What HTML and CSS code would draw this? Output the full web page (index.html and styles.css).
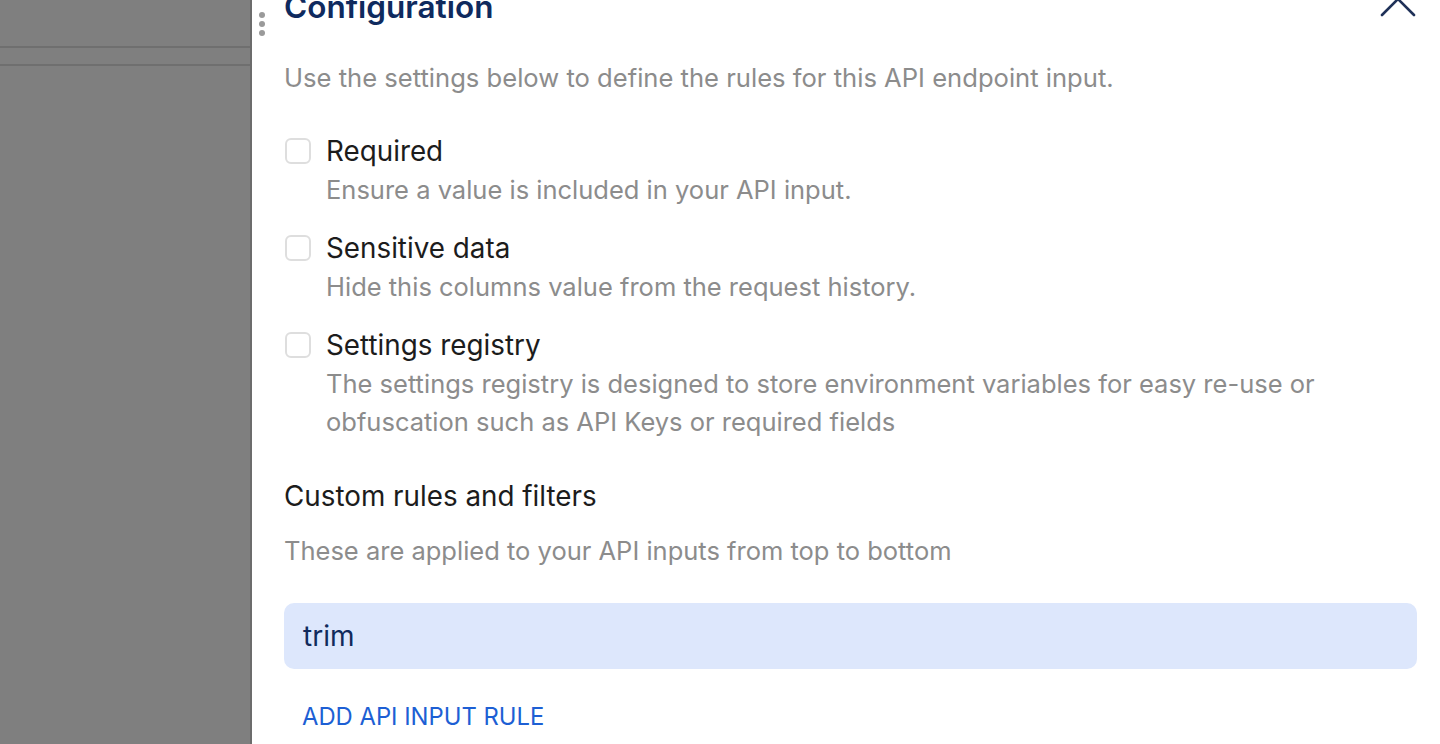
FILE: index.html
```html
<!DOCTYPE html>
<html lang="en">
<head>
<meta charset="utf-8">
<title>Configuration</title>
<link rel="stylesheet" href="styles.css">
</head>
<body>
<div class="layout">
  <div class="backdrop">
    <div class="backdrop-line first"></div>
    <div class="backdrop-line second"></div>
  </div>
  <aside class="panel">
    <div class="drag-handle"><span></span><span></span><span></span></div>
    <button class="close" aria-label="Close">
      <svg width="40" height="40" viewBox="0 0 40 40"><path d="M4 4 L36 36 M36 4 L4 36" stroke="#1f3158" stroke-width="2.6" stroke-linecap="round" fill="none"/></svg>
    </button>
    <div class="panel-body">
      <h2 class="title">Configuration</h2>
      <p class="subtitle">Use the settings below to define the rules for this API endpoint input.</p>

      <div class="options">
        <label class="option">
          <span class="checkbox"></span>
          <span class="option-text">
            <span class="option-label">Required</span>
            <span class="option-desc">Ensure a value is included in your API input.</span>
          </span>
        </label>
        <label class="option">
          <span class="checkbox"></span>
          <span class="option-text">
            <span class="option-label">Sensitive data</span>
            <span class="option-desc">Hide this columns value from the request history.</span>
          </span>
        </label>
        <label class="option">
          <span class="checkbox"></span>
          <span class="option-text">
            <span class="option-label">Settings registry</span>
            <span class="option-desc">The settings registry is designed to store environment variables for easy re-use or obfuscation such as API Keys or required fields</span>
          </span>
        </label>
      </div>

      <h3 class="section-title">Custom rules and filters</h3>
      <p class="section-desc">These are applied to your API inputs from top to bottom</p>

      <div class="rule">trim</div>

      <button class="add-rule">ADD API INPUT RULE</button>
    </div>
  </aside>
</div>
</body>
</html>
```

FILE: styles.css
```css
* { box-sizing: border-box; }
html, body { margin: 0; padding: 0; height: 100%; }
body {
  font-family: Inter, "Noto Sans", sans-serif;
  background: #ffffff;
  overflow: hidden;
}
.layout {
  display: flex;
  height: 744px;
}
.backdrop {
  width: 252px;
  flex: none;
  background: #7f7f7f;
  border-right: 2px solid #6c6c6c;
  padding-top: 46px;
}
.backdrop-line {
  height: 2px;
  background: #6f6f6f;
}
.backdrop-line.second { margin-top: 16px; }
.panel {
  position: relative;
  flex: 1;
  background: #ffffff;
  overflow: hidden;
}
.drag-handle {
  position: absolute;
  left: 7px;
  top: 12px;
  display: flex;
  flex-direction: column;
  gap: 3px;
}
.drag-handle span {
  width: 6px;
  height: 6px;
  border-radius: 50%;
  background: #9a9a9a;
}
.close {
  position: absolute;
  right: 22px;
  top: -21px;
  width: 40px;
  height: 40px;
  padding: 0;
  border: 0;
  background: none;
}
.close svg { display: block; }
.panel-body {
  padding: 0 23px 0 32px;
  margin-top: -13px;
}
.title {
  margin: 0;
  font-size: 31.5px;
  line-height: 40px;
  font-weight: 600;
  color: #0f2a5e;
}
.subtitle {
  margin: 32px 0 0;
  font-size: 25.6px;
  line-height: 38px;
  color: #8c8c8c;
}
.options {
  margin-top: 35px;
  display: flex;
  flex-direction: column;
  gap: 20px;
}
.option {
  display: flex;
  align-items: flex-start;
  gap: 15px;
}
.checkbox {
  flex: none;
  width: 26px;
  height: 26px;
  margin: 6px 0 0 1px;
  border: 2px solid #dedede;
  border-radius: 6px;
  background: #fff;
}
.option-text {
  display: flex;
  flex-direction: column;
}
.option-label {
  font-size: 27.8px;
  line-height: 38px;
  color: #1c1c1c;
}
.option-desc {
  margin-top: 1px;
  font-size: 25.5px;
  line-height: 38px;
  color: #8c8c8c;
  max-width: 1020px;
}
.section-title {
  margin: 36px 0 0;
  font-size: 27.8px;
  line-height: 38px;
  font-weight: 400;
  color: #1c1c1c;
}
.section-desc {
  margin: 17px 0 0;
  font-size: 25.5px;
  line-height: 38px;
  color: #8c8c8c;
}
.rule {
  margin-top: 33px;
  height: 66px;
  border-radius: 10px;
  background: #dde7fc;
  padding: 0 19px;
  display: flex;
  align-items: center;
  font-size: 28px;
  color: #112b5c;
}
.add-rule {
  margin: 29px 0 0 18px;
  padding: 0;
  border: 0;
  background: none;
  font-family: inherit;
  font-size: 23.8px;
  line-height: 38px;
  color: #1d5fd4;
  letter-spacing: 0;
}
```
